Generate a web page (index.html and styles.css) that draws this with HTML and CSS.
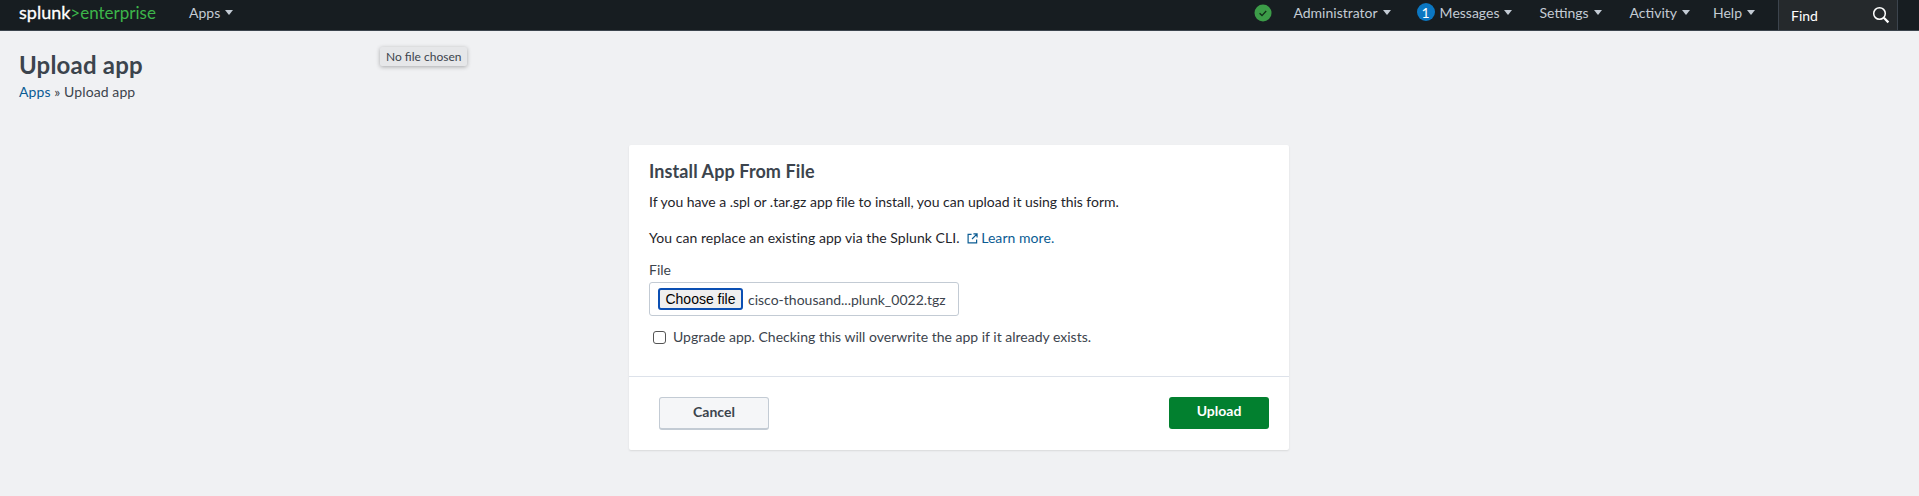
FILE: index.html
```html
<!DOCTYPE html>
<html lang="en">
<head>
<meta charset="utf-8">
<title>Upload app</title>
<link rel="stylesheet" href="styles.css">
</head>
<body>
<header class="nav">
  <a class="logo"><span class="logo-w">splunk</span><span class="logo-g">&gt;enterprise</span></a>
  <a class="nav-item apps">Apps<i class="caret"></i></a>
  <div class="nav-right">
    <span class="status"><svg viewBox="0 0 18 18" width="18" height="18"><circle cx="9" cy="9" r="8.5" fill="#3c9c48"/><path d="M5.6 9.2l2.4 2.4 4.2-4.6" fill="none" stroke="#12301a" stroke-width="1.4"/></svg></span>
    <a class="nav-item admin">Administrator<i class="caret"></i></a>
    <a class="nav-item messages"><span class="badge">1</span>Messages<i class="caret"></i></a>
    <a class="nav-item settings">Settings<i class="caret"></i></a>
    <a class="nav-item activity">Activity<i class="caret"></i></a>
    <a class="nav-item help">Help<i class="caret"></i></a>
    <div class="find"><span>Find</span><svg viewBox="0 0 18 18" width="18" height="18"><circle cx="7.5" cy="7.5" r="5.8" fill="none" stroke="#fff" stroke-width="1.5"/><path d="M11.8 11.8l4.6 4.6" stroke="#fff" stroke-width="2.2"/></svg></div>
  </div>
</header>
<main class="page">
  <h1 class="title">Upload app</h1>
  <p class="crumbs"><a class="link">Apps</a> » Upload app</p>
  <div class="tooltip">No file chosen</div>
  <section class="card">
    <div class="card-body">
      <h2 class="card-title">Install App From File</h2>
      <p class="line first">If you have a .spl or .tar.gz app file to install, you can upload it using this form.</p>
      <p class="line second">You can replace an existing app via the Splunk CLI. <a class="link learn"><svg viewBox="0 0 12 12" width="11" height="11"><path d="M5 1.5H1.2v9.3h9.3V7M7 1h4v4M11 1L5.5 6.5" fill="none" stroke="#0b5c93" stroke-width="1.3"/></svg>Learn more.</a></p>
      <label class="file-label">File</label>
      <div class="file-box"><span class="choose">Choose file</span><span class="file-name">cisco-thousand...plunk_0022.tgz</span></div>
      <div class="upgrade"><span class="check"></span><span>Upgrade app. Checking this will overwrite the app if it already exists.</span></div>
    </div>
    <div class="card-foot">
      <a class="btn cancel">Cancel</a>
      <a class="btn upload">Upload</a>
    </div>
  </section>
</main>
</body>
</html>
```
FILE: styles.css
```css
* { box-sizing: border-box; }
html, body { margin: 0; height: 100%; }
body {
  background: #f0f1f3;
  color: #1f252b;
  font-family: "Lato", "Liberation Sans", sans-serif;
  font-size: 14px;
  overflow: hidden;
}
p, h1, h2 { margin: 0; }
.nav {
  height: 31px;
  background: #171d21;
  border-bottom: 1px solid #3c444d;
  display: flex;
  align-items: center;
  padding-left: 19px;
  color: #c3cbd4;
}
.logo { font-size: 18px; line-height: 24px; margin-top: -6px; width: 170px; white-space: nowrap; }
.logo-w { color: #fff; -webkit-text-stroke: 0.3px #fff; }
.logo-g { color: #3db54a; font-size: 17px; }
.nav-item { display: flex; align-items: center; white-space: nowrap; margin-top: -6px; }
.caret {
  display: inline-block;
  width: 0; height: 0;
  margin-left: 5px;
  border-left: 4px solid transparent;
  border-right: 4px solid transparent;
  border-top: 5px solid #c3cbd4;
}
.nav-right { margin-left: auto; display: flex; align-items: center; height: 100%; }
.status { display: flex; margin: -5px 21px 0 0; }
.admin { margin-right: 26px; }
.messages { margin-right: 27px; }
.settings { margin-right: 28px; }
.activity { margin-right: 23px; }
.help { margin-right: 23px; }
.badge {
  width: 18px; height: 18px; border-radius: 50%;
  background: #0b77c2; color: #fff;
  display: flex; align-items: center; justify-content: center;
  margin-right: 5px;
}
.find {
  width: 120px;
  height: 30px;
  background: #25292c;
  border-left: 1px solid #3c444d;
  border-right: 1px solid #3c444d;
  margin-right: 21px;
  display: flex;
  align-items: center;
  justify-content: space-between;
  padding: 0 7px 0 12px;
  color: #fff;
}
.page { position: relative; padding: 19px 20px 0 19px; }
.title { font-size: 24px; font-weight: 700; line-height: 30px; letter-spacing: 0.2px; color: #3c444d; }
.crumbs { line-height: 20px; margin-top: 2px; letter-spacing: 0.1px; color: #3c444d; }
.link { color: #0b5c93; }
.tooltip {
  position: absolute;
  left: 380px; top: 16px;
  height: 19px;
  padding: 0 6px;
  font-size: 12px;
  line-height: 19px;
  color: #3c444d;
  background: #e6e7e9;
  border-radius: 2px;
  box-shadow: 0 1px 4px rgba(0,0,0,.3);
}
.card {
  width: 660px;
  height: 305px;
  margin: 43px auto 0;
  background: #fff;
  border-radius: 2px;
  box-shadow: 0 1px 2px rgba(0,0,0,.1);
}
.card-body { height: 232px; padding: 16px 20px 0; border-bottom: 1px solid #dde2ea; }
.card-title { font-size: 18px; font-weight: 700; line-height: 20px; letter-spacing: 0.1px; color: #3c444d; }
.line { line-height: 20px; }
.first { margin-top: 11px; letter-spacing: -0.03px; }
.second { margin-top: 16px; letter-spacing: 0.05px; }
.learn { margin-left: 4px; }
.learn svg { margin-right: 3px; vertical-align: -1px; }
.file-label { display: block; margin-top: 12px; line-height: 20px; color: #3c444d; }
.file-box {
  width: 310px; height: 34px;
  margin-top: 2px;
  border: 1px solid #c3cbd4;
  border-radius: 3px;
  display: flex;
  align-items: center;
  padding-left: 8px;
}
.choose {
  width: 85px; height: 22px;
  background: #efefef;
  border: 2px solid #0b4fb3;
  border-radius: 3px;
  font-family: "Liberation Sans", sans-serif;
  font-size: 14px;
  line-height: 18px;
  text-align: center;
  color: #000;
}
.file-name { margin-left: 5px; color: #3c444d; }
.upgrade { display: flex; align-items: center; margin: 11px 0 0 4px; line-height: 20px; color: #3c444d; }
.check {
  width: 13px; height: 13px;
  border: 1px solid #555;
  border-radius: 3px;
  margin-right: 7px;
}
.card-foot { display: flex; justify-content: space-between; padding: 20px 20px 0 30px; }
.btn { font-weight: 700; text-align: center; border-radius: 3px; }
.cancel {
  width: 110px; height: 33px; line-height: 28px;
  color: #3c444d;
  background: #f5f6f8;
  border: 1px solid #c3cbd4;
  border-bottom-width: 2px;
}
.upload {
  width: 100px; height: 32px; line-height: 27px;
  color: #fff;
  background: #02802f;
}
```
